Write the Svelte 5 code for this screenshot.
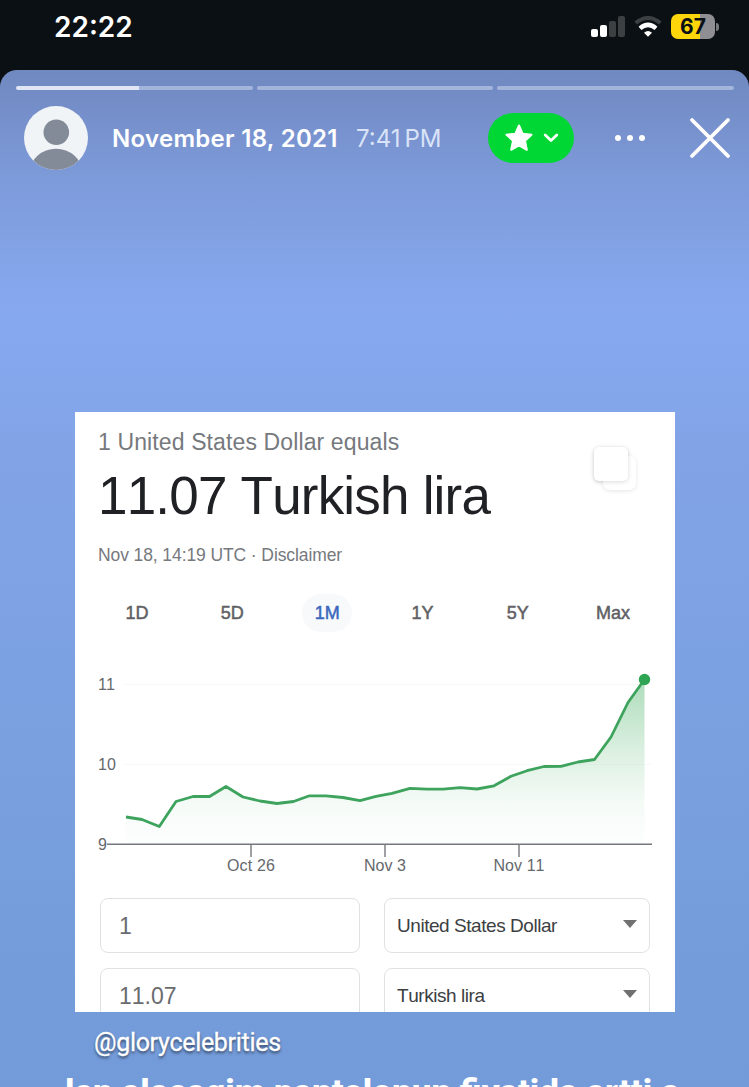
<script>
  const ranges = ['1D', '5D', '1M', '1Y', '5Y', 'Max'];
  let range = $state('1M');

  // chart coordinates, the svg starts at the card's left edge
  const points = [
    [51, 157], [67, 159.5], [84.3, 166.5], [101, 141.5], [118, 136.5], [134.5, 136.5],
    [151, 126.5], [168, 137], [185, 141], [202, 143.5], [218.5, 141.5], [234.5, 135.8],
    [251, 135.8], [268, 137.5], [285, 140.7], [301, 136.3], [317, 133.3], [335, 128.3],
    [352, 129.2], [368, 129.2], [385, 127.7], [402, 129], [419, 125.8], [436, 116.3],
    [452, 110.7], [469, 106.5], [486, 106.3], [503, 102], [519.5, 99.5], [536, 77],
    [553, 42.5], [569.5, 19.5]
  ];
  const line = points.map((p) => p.join(',')).join(' ');
  const area = `${line} 569.5,184 51,184`;

  const ticks = [
    { x: 176, label: 'Oct 26', width: 48 },
    { x: 310, label: 'Nov 3', width: 42 },
    { x: 444, label: 'Nov 11', width: 51 }
  ];
  const rows = [
    { amount: '1', currency: 'United States Dollar' },
    { amount: '11.07', currency: 'Turkish lira' }
  ];
</script>

<main>
  <header class="status">
    <span class="clock">22:22</span>
    <div class="indicators">
      <svg class="signal" width="34" height="21" viewBox="0 0 34 21">
        <rect x="0" y="13" width="7" height="8" rx="2" fill="#fff" />
        <rect x="9" y="9" width="7" height="12" rx="2" fill="#fff" />
        <rect x="18" y="5" width="7" height="16" rx="2" fill="#3d4043" />
        <rect x="27" y="0" width="7" height="21" rx="2" fill="#3d4043" />
      </svg>
      <svg class="wifi" width="28" height="21" viewBox="0 0 28 21">
        <path d="M1.7 7Q14 -3 26.3 7" fill="none" stroke="#3d4043" stroke-width="4" />
        <path d="M6 12.3Q14 5.4 22 12.3" fill="none" stroke="#fff" stroke-width="4.4" />
        <path d="M10 16.8Q14 13.3 18 16.8L14 20.8Z" fill="#fff" />
      </svg>
      <div class="battery"><span>67</span></div>
      <i class="cap"></i>
    </div>
  </header>

  <section class="story">
    <div class="progress">
      <i class="current"></i><i></i><i></i>
    </div>

    <div class="top">
      <svg class="avatar" width="64" height="64" viewBox="0 0 64 64">
        <clipPath id="round"><circle cx="32" cy="32" r="32" /></clipPath>
        <g clip-path="url(#round)">
          <rect width="64" height="64" fill="#f1f4f7" />
          <circle cx="32.3" cy="26.2" r="12.8" fill="#848b98" />
          <ellipse cx="32" cy="66" rx="26" ry="23.3" fill="#848b98" />
        </g>
      </svg>
      <span class="date">November 18, 2021</span>
      <span class="time">7:41<b>PM</b></span>
      <button class="favorites" aria-label="Close friends">
        <svg width="86" height="50" viewBox="0 0 86 50">
          <path d="M31 12.5L34.7 20.8L43.5 21.7L37 27.8L38.8 36.8L31 32.3L23.2 36.8L25 27.8L18.5 21.7L27.3 20.8Z" fill="#fff" stroke="#fff" stroke-width="2" stroke-linejoin="round" />
          <path d="M57.2 22L63 27.5L68.8 22" fill="none" stroke="#fff" stroke-width="2.8" stroke-linecap="round" stroke-linejoin="round" />
        </svg>
      </button>
      <svg class="dots" width="30" height="8" viewBox="0 0 30 8" fill="#fff">
        <circle cx="3" cy="4" r="3" />
        <circle cx="15" cy="4" r="3" />
        <circle cx="27" cy="4" r="3" />
      </svg>
      <svg class="close" width="42" height="42" viewBox="0 0 42 42">
        <path d="M3 3L39 39M39 3L3 39" stroke="#fff" stroke-width="3.8" stroke-linecap="round" />
      </svg>
    </div>

    <article class="card">
      <div class="heading">
        <div>
          <p class="equals">1 United States Dollar equals</p>
          <h1>11.07 Turkish lira</h1>
          <p class="source">Nov 18, 14:19 UTC · Disclaimer</p>
        </div>
        <svg class="stack" width="56" height="56" viewBox="0 0 56 56">
          <rect x="15" y="14" width="33" height="34" rx="7" />
          <rect class="front" x="6" y="5" width="34" height="34" rx="5" />
        </svg>
      </div>

      <nav>
        {#each ranges as r}
          <button class:active={r === range} onclick={() => (range = r)}>{r}</button>
        {/each}
      </nav>

      <svg class="chart" width="600" height="220" viewBox="0 0 600 220">
        <defs>
          <linearGradient id="fade" x1="0" y1="19" x2="0" y2="184" gradientUnits="userSpaceOnUse">
            <stop offset="0" stop-color="#34a853" stop-opacity="0.4" />
            <stop offset="0.45" stop-color="#34a853" stop-opacity="0.17" />
            <stop offset="0.75" stop-color="#34a853" stop-opacity="0.05" />
            <stop offset="1" stop-color="#34a8a0" stop-opacity="0.01" />
          </linearGradient>
        </defs>
        <path d="M48 24.5H577M48 104.5H577" stroke="#f8f9f9" />
        <polygon points={area} fill="url(#fade)" />
        <path d="M32 184.3H577" stroke="#74777b" stroke-width="1.4" />
        <polyline points={line} fill="none" stroke="#3da35d" stroke-width="2.8" stroke-linejoin="round" />
        <circle cx="569.5" cy="19.5" r="5.7" fill="#2fa553" />
        <text x="23" y="30" textLength="17">11</text>
        <text x="23" y="110" textLength="18">10</text>
        <text x="23" y="189.5">9</text>
        {#each ticks as t}
          <path d="M{t.x} 184V197" stroke="#74777b" stroke-width="1.4" />
          <text x={t.x - t.width / 2} y="210.5" textLength={t.width}>{t.label}</text>
        {/each}
      </svg>

      <div class="form">
        {#each rows as row}
          <div class="row">
            <div class="amount">{row.amount}</div>
            <div class="currency">
              <span>{row.currency}</span>
              <i class="arrow"></i>
            </div>
          </div>
        {/each}
      </div>
    </article>

    <p class="handle">@glorycelebrities</p>
    <p class="caption">lan alacagim pantolonun fiyatida artti a</p>
  </section>
</main>

<style>
  :global(body) {
    background: #0b1014;
  }
  main {
    width: 749px;
    height: 1087px;
    overflow: hidden;
    display: flex;
    flex-direction: column;
    background: #0b1014;
    font-family: "Liberation Sans", Arial, sans-serif;
  }
  p,
  h1 {
    margin: 0;
    white-space: nowrap;
  }
  button {
    border: 0;
    padding: 0;
    font-family: inherit;
  }
  svg {
    display: block;
    flex: none;
  }
  .status {
    flex: none;
    height: 70px;
    box-sizing: border-box;
    padding: 10px 30px 0 54px;
    display: flex;
    justify-content: space-between;
    align-items: flex-start;
    color: #fff;
    font-family: Inter, sans-serif;
  }
  .clock {
    font-size: 28px;
    line-height: 34px;
    font-weight: 600;
  }
  .indicators {
    display: flex;
    align-items: center;
    padding-top: 4px;
  }
  .wifi {
    margin: 0 9px;
  }
  .battery {
    width: 44px;
    height: 25px;
    border-radius: 7px;
    background: linear-gradient(90deg, #ffd60a 66%, #8e8e93 66%);
    color: #0b1014;
    font-size: 21px;
    line-height: 25px;
    font-weight: 700;
    text-align: center;
  }
  .cap {
    width: 3px;
    height: 8px;
    margin-left: 1px;
    border-radius: 0 4px 4px 0;
    background: #77797c;
  }
  .story {
    flex: 1;
    min-height: 0;
    display: flex;
    flex-direction: column;
    border-radius: 17px 17px 0 0;
    background: linear-gradient(#7089c0 0, #748dc7 30px, #7e9cdc 120px, #85a6eb 210px, #86a8ef 250px, #82a4e7 370px, #7ca1e2 600px, #769ddb 850px, #739bd9 1017px);
  }
  .progress {
    display: flex;
    gap: 4px;
    padding: 16px 15px 0 16px;
  }
  .progress i {
    flex: 1;
    height: 4px;
    border-radius: 2px;
    background: #a3b5da;
  }
  .progress .current {
    background: linear-gradient(90deg, #e0e6f3 52%, #a3b5da 52%);
  }
  .top {
    display: flex;
    align-items: center;
    height: 64px;
    margin-top: 16px;
    padding-left: 24px;
    color: #fff;
    font-family: Inter, sans-serif;
    font-size: 24px;
    white-space: nowrap;
  }
  .date {
    width: 227px;
    margin-left: 24px;
    font-weight: 600;
    letter-spacing: 0.3px;
  }
  .time {
    width: 87px;
    margin-left: 17px;
    color: #d9e3f7;
  }
  .time b {
    font-weight: 400;
    margin-left: 4px;
  }
  .favorites {
    width: 86px;
    height: 50px;
    margin-left: 45px;
    border-radius: 25px;
    background: #00d735;
  }
  .dots {
    margin-left: 41px;
  }
  .close {
    margin-left: 44px;
  }
  .card {
    flex: none;
    width: 600px;
    height: 600px;
    margin: 242px 0 0 75px;
    overflow: hidden;
    background: #fff;
    font-kerning: none;
  }
  .heading {
    display: flex;
    justify-content: space-between;
    height: 175px;
    padding: 0 31px 0 23px;
  }
  .equals {
    margin-top: 17px;
    font-size: 23px;
    line-height: 26px;
    letter-spacing: 0.12px;
    color: #76797d;
  }
  h1 {
    margin-top: 14px;
    font-size: 53px;
    line-height: 54px;
    font-weight: 400;
    letter-spacing: -0.8px;
    color: #202124;
  }
  .source {
    margin-top: 22px;
    font-size: 17.5px;
    line-height: 20px;
    letter-spacing: -0.1px;
    color: #76797d;
  }
  .stack {
    margin-top: 30px;
    filter: drop-shadow(0 1px 2px rgba(0, 0, 0, 0.1));
  }
  .stack rect {
    fill: #fff;
  }
  .stack .front {
    filter: drop-shadow(0 1px 2px rgba(0, 0, 0, 0.14));
  }
  nav {
    display: flex;
    justify-content: space-between;
    padding: 7px 37px 0 37px;
    height: 66px;
  }
  nav button {
    width: 50px;
    height: 38px;
    border-radius: 19px;
    background: none;
    color: #5f6165;
    font-size: 18px;
    -webkit-text-stroke: 0.5px currentColor;
  }
  nav .active {
    background: #f8f9fa;
    color: #3b67bd;
  }
  .chart text {
    font-size: 16px;
    fill: #65686c;
  }
  .form {
    display: flex;
    flex-direction: column;
    gap: 15px;
    padding: 18px 25px 0 25px;
  }
  .row {
    display: flex;
    gap: 24px;
  }
  .amount,
  .currency {
    box-sizing: border-box;
    height: 55px;
    border: 1.5px solid #dfe1e3;
    border-radius: 8px;
    line-height: 55px;
    color: #6a6c6f;
  }
  .amount {
    width: 260px;
    padding-left: 18px;
    font-size: 23px;
  }
  .currency {
    width: 266px;
    padding: 0 12px 0 12px;
    display: flex;
    align-items: center;
    justify-content: space-between;
    font-size: 19px;
    letter-spacing: -0.45px;
    color: #3c4043;
  }
  .arrow {
    margin-bottom: 3px;
    border: 7px solid transparent;
    border-top: 8px solid #707070;
    border-bottom: 0;
  }
  .handle {
    margin: 16px 0 0 94px;
    font-family: Roboto, sans-serif;
    font-size: 25px;
    line-height: 30px;
    color: #fff;
    letter-spacing: -0.3px;
    -webkit-text-stroke: 0.3px #fff;
    text-shadow: 0 2px 3px rgba(0, 0, 0, 0.6);
  }
  /* runs past the bottom of the screen */
  .caption {
    margin: 14px 0 0 65px;
    font-family: Roboto, sans-serif;
    font-size: 35px;
    line-height: 42px;
    font-weight: 800;
    color: #fff;
  }
</style>
